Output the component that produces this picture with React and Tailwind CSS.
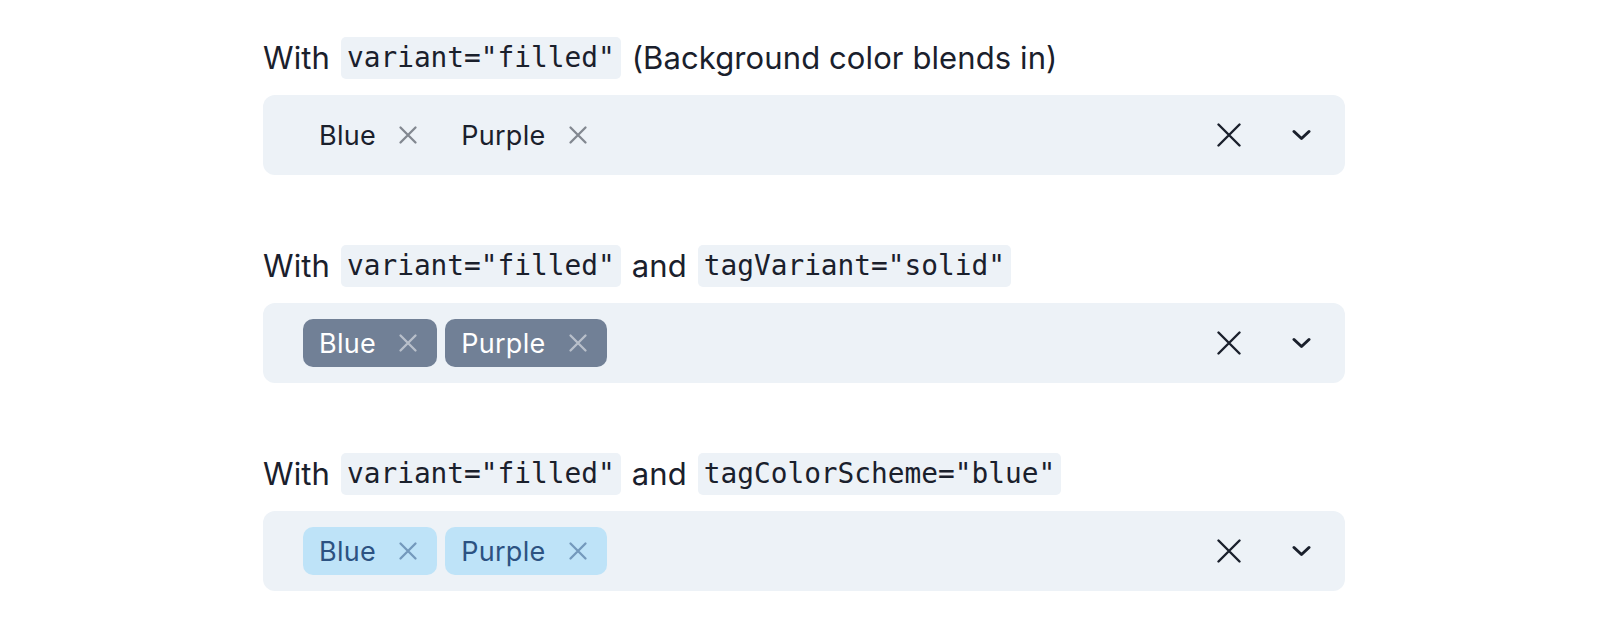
import React from 'react';

const SANS = { fontFamily: 'Inter, "Noto Sans", sans-serif' };

const TagClose = ({ className = "" }) => (
  <svg width="20" height="20" viewBox="0 0 20 20" className={className}>
    <path d="M2.5 2.5 L17.5 17.5 M17.5 2.5 L2.5 17.5" stroke="currentColor" strokeWidth="2.3" strokeLinecap="round" fill="none" />
  </svg>
);

const tagStyles = {
  ghost: "bg-transparent text-[#1A202C]",
  solid: "bg-[#718096] text-white",
  blue: "bg-[#BEE3F8] text-[#2C5282]",
};

const Tag = ({ label, variant }) => (
  <div className={`h-[48px] flex items-center rounded-[10px] pl-4 pr-[19px] ${tagStyles[variant]}`}>
    <span className="text-[27px] leading-none tracking-[0.3px]">{label}</span>
    <TagClose className="ml-[22px] opacity-50" />
  </div>
);

const Code = ({ children }) => (
  <code className="h-[42px] px-[6px] flex items-center rounded-[5px] bg-[#EDF2F7] text-[27.8px] tracking-normal text-[#1A202C] font-['DejaVu_Sans_Mono',monospace]">
    {children}
  </code>
);

const Select = ({ variant }) => (
  <div className="mt-4 h-[80px] w-[1082px] rounded-[12px] bg-[#EDF2F7] flex items-center pl-10 pr-[34px]">
    <div className="flex-1 flex gap-2">
      <Tag label="Blue" variant={variant} />
      <Tag label="Purple" variant={variant} />
    </div>
    <svg width="24" height="24" viewBox="0 0 24 24" className="text-[#1A202C]">
      <path d="M1.5 1.5 L22.5 22.5 M22.5 1.5 L1.5 22.5" stroke="currentColor" strokeWidth="2.4" strokeLinecap="round" fill="none" />
    </svg>
    <svg width="19" height="14" viewBox="0 0 19 14" className="ml-[51px] text-[#1A202C]">
      <path d="M2 3.5 L9.5 10.5 L17 3.5" stroke="currentColor" strokeWidth="3" strokeLinecap="round" strokeLinejoin="round" fill="none" />
    </svg>
  </div>
);

const Label = ({ children }) => (
  <div className="h-[42px] flex items-center gap-[11px] text-[31px] tracking-[0.1px] text-[#1A202C]">
    {children}
  </div>
);

export default function App() {
  return (
    <div className="min-h-screen bg-white pl-[263px] pt-[37px]" style={SANS}>
      <div className="mb-[70px]">
        <Label>
          <span>With</span>
          <Code>variant="filled"</Code>
          <span>(Background color blends in)</span>
        </Label>
        <Select variant="ghost" />
      </div>
      <div className="mb-[70px]">
        <Label>
          <span>With</span>
          <Code>variant="filled"</Code>
          <span>and</span>
          <Code>tagVariant="solid"</Code>
        </Label>
        <Select variant="solid" />
      </div>
      <div>
        <Label>
          <span>With</span>
          <Code>variant="filled"</Code>
          <span>and</span>
          <Code>tagColorScheme="blue"</Code>
        </Label>
        <Select variant="blue" />
      </div>
    </div>
  );
}
